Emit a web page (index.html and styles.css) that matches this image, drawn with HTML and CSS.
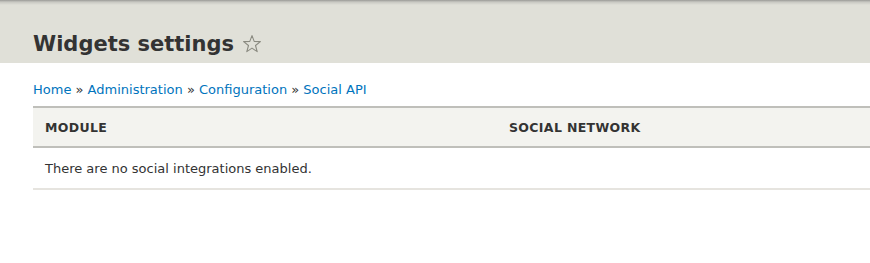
FILE: index.html
```html
<!DOCTYPE html>
<html lang="en">

<head>
    <meta charset="UTF-8">
    <title>Widgets settings</title>
    <link rel="stylesheet" href="styles.css">
</head>

<body>
    <div class="page-header">
        <h1 class="page-title">Widgets settings <span class="shortcut">
            <svg width="20" height="20" viewBox="0 0 20 20">
                <path d="M10 1.6 L12.2 7.4 L18.4 7.6 L13.5 11.5 L15.2 17.6 L10 14.1 L4.8 17.6 L6.5 11.5 L1.6 7.6 L7.8 7.4 Z" fill="none" stroke="#8a8a80" stroke-width="1.1" stroke-linejoin="round"/>
            </svg>
        </span></h1>
    </div>
    <div class="content">
        <nav class="breadcrumb">
            <a href="#">Home</a> » <a href="#">Administration</a> » <a href="#">Configuration</a> » <a href="#">Social API</a>
        </nav>
        <table class="list">
            <thead>
                <tr>
                    <th class="col-module">Module</th>
                    <th>Social network</th>
                </tr>
            </thead>
            <tbody>
                <tr>
                    <td colspan="2">There are no social integrations enabled.</td>
                </tr>
            </tbody>
        </table>
    </div>
</body>

</html>
```

FILE: styles.css
```css
* {
    margin: 0;
    padding: 0;
    box-sizing: border-box;
}

body {
    font-family: "DejaVu Sans", "Liberation Sans", sans-serif;
    color: #333;
    background-color: #fff;
    overflow: hidden;
}

.page-header {
    height: 63px;
    background-color: #e0e0d8;
    background-image: linear-gradient(to bottom, #9a9a96 0, #c8c8c2 2px, #e0e0d8 5px);
    padding: 31px 0 0 33px;
}

.page-title {
    font-size: 21px;
    font-weight: bold;
    line-height: 26px;
    color: #333;
    display: flex;
    align-items: center;
}

.shortcut {
    display: inline-flex;
    margin-left: 8px;
}

.content {
    padding: 19px 0 0 33px;
}

.breadcrumb {
    font-size: 13px;
    line-height: 16px;
    color: #333;
    margin-bottom: 8px;
}

.breadcrumb a {
    color: #0074bd;
    text-decoration: none;
}

.list {
    width: 100%;
    border-collapse: collapse;
    font-size: 13px;
}

.list th {
    text-align: left;
    text-transform: uppercase;
    font-size: 12.5px;
    letter-spacing: 0.35px;
    font-weight: bold;
    background-color: #f3f3ef;
    border-top: 2px solid #bfbfba;
    border-bottom: 2px solid #bfbfba;
    height: 40px;
    padding: 0 12px;
}

.list .col-module {
    width: 464px;
}

.list td {
    padding: 0 12px;
    height: 42px;
    border-bottom: 2px solid #e6e4df;
}
```
